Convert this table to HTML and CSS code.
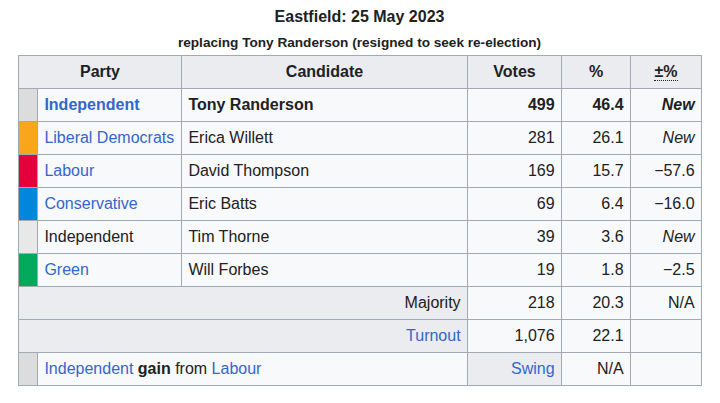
FILE: index.html
```html
<!DOCTYPE html>
<html lang="en">
<head>
  <meta charset="UTF-8" />
  <meta name="viewport" content="width=device-width, initial-scale=1" />
  <title>Eastfield by-election, 25 May 2023</title>
  <link rel="stylesheet" href="styles.css">
</head>
<body>
  <div class="result">
    <!-- Caption -->
    <div class="result-title">Eastfield: 25 May 2023</div>
    <div class="result-subtitle">replacing Tony Randerson (resigned to seek re-election)</div>

    <table class="wikitable">
      <colgroup>
        <col class="col-strip" />
        <col class="col-party" />
        <col class="col-candidate" />
        <col class="col-votes" />
        <col class="col-pct" />
        <col class="col-change" />
      </colgroup>
      <thead>
        <tr>
          <th colspan="2">Party</th>
          <th>Candidate</th>
          <th>Votes</th>
          <th>%</th>
          <th><abbr class="change-abbr" title="Change">±%</abbr></th>
        </tr>
      </thead>
      <tbody>
        <tr class="winner">
          <td class="strip strip-ind"></td>
          <td><a href="#">Independent</a></td>
          <td>Tony Randerson</td>
          <td class="num">499</td>
          <td class="num">46.4</td>
          <td class="num"><em>New</em></td>
        </tr>
        <tr>
          <td class="strip strip-ld"></td>
          <td><a href="#">Liberal Democrats</a></td>
          <td>Erica Willett</td>
          <td class="num">281</td>
          <td class="num">26.1</td>
          <td class="num"><em>New</em></td>
        </tr>
        <tr>
          <td class="strip strip-lab"></td>
          <td><a href="#">Labour</a></td>
          <td>David Thompson</td>
          <td class="num">169</td>
          <td class="num">15.7</td>
          <td class="num">−57.6</td>
        </tr>
        <tr>
          <td class="strip strip-con"></td>
          <td><a href="#">Conservative</a></td>
          <td>Eric Batts</td>
          <td class="num">69</td>
          <td class="num">6.4</td>
          <td class="num">−16.0</td>
        </tr>
        <tr>
          <td class="strip strip-ind-light"></td>
          <td>Independent</td>
          <td>Tim Thorne</td>
          <td class="num">39</td>
          <td class="num">3.6</td>
          <td class="num"><em>New</em></td>
        </tr>
        <tr>
          <td class="strip strip-green"></td>
          <td><a href="#">Green</a></td>
          <td>Will Forbes</td>
          <td class="num">19</td>
          <td class="num">1.8</td>
          <td class="num">−2.5</td>
        </tr>
        <!-- Totals -->
        <tr>
          <td colspan="3" class="label">Majority</td>
          <td class="num">218</td>
          <td class="num">20.3</td>
          <td class="num">N/A</td>
        </tr>
        <tr>
          <td colspan="3" class="label"><a href="#">Turnout</a></td>
          <td class="num">1,076</td>
          <td class="num">22.1</td>
          <td></td>
        </tr>
        <tr>
          <td class="strip strip-ind"></td>
          <td colspan="2"><a href="#">Independent</a> <b>gain</b> from <a href="#">Labour</a></td>
          <td class="label"><a href="#">Swing</a></td>
          <td class="num">N/A</td>
          <td></td>
        </tr>
      </tbody>
    </table>
  </div>
</body>
</html>
```

FILE: styles.css
```css
/* Global */
body {
  margin: 0;
  background: #FFF;
  color: #202122;
  font-family: "Liberation Sans", Arial, sans-serif;
  font-size: 16px;
}
a {
  color: #3366CC;
  text-decoration: none;
}

/* Caption */
.result {
  width: 683px;
  margin-left: 18px;
  padding-top: 4px;
}
.result-title {
  text-align: center;
  font-weight: bold;
  line-height: 25.6px;
}
.result-subtitle {
  margin-top: 2px;
  text-align: center;
  font-weight: bold;
  font-size: 13.6px;
  line-height: 21.6px;
}

/* Results table */
.wikitable {
  margin-top: 2px;
  width: 683px;
  table-layout: fixed;
  border-collapse: collapse;
  background: #F8F9FA;
  border: 1px solid #A2A9B1;
}
.col-strip { width: 19px; }
.col-party { width: 144px; }
.col-candidate { width: 286px; }
.col-votes { width: 94px; }
.col-pct { width: 69px; }
.col-change { width: 71px; }

.wikitable th,
.wikitable td {
  border: 1px solid #A2A9B1;
  padding: 3.2px 6.4px;
  line-height: 25.6px;
  white-space: nowrap;
}
.wikitable th {
  background: #EAECF0;
  font-weight: bold;
  text-align: center;
}
.wikitable td {
  text-align: left;
}
.wikitable .num {
  text-align: right;
}
.wikitable .label {
  background: #EAECF0;
  text-align: right;
}
.winner td {
  font-weight: bold;
}
.change-abbr {
  text-decoration: none;
  border-bottom: 1px dotted #202122;
}

/* Party colour strips */
.wikitable .strip { padding: 0; }
.strip-ind { background: #DCDCDC; }
.strip-ind-light { background: #E8E8E8; }
.strip-ld { background: #FAA61A; }
.strip-lab { background: #E4003B; }
.strip-con { background: #0087DC; }
.strip-green { background: #02A95B; }
```
